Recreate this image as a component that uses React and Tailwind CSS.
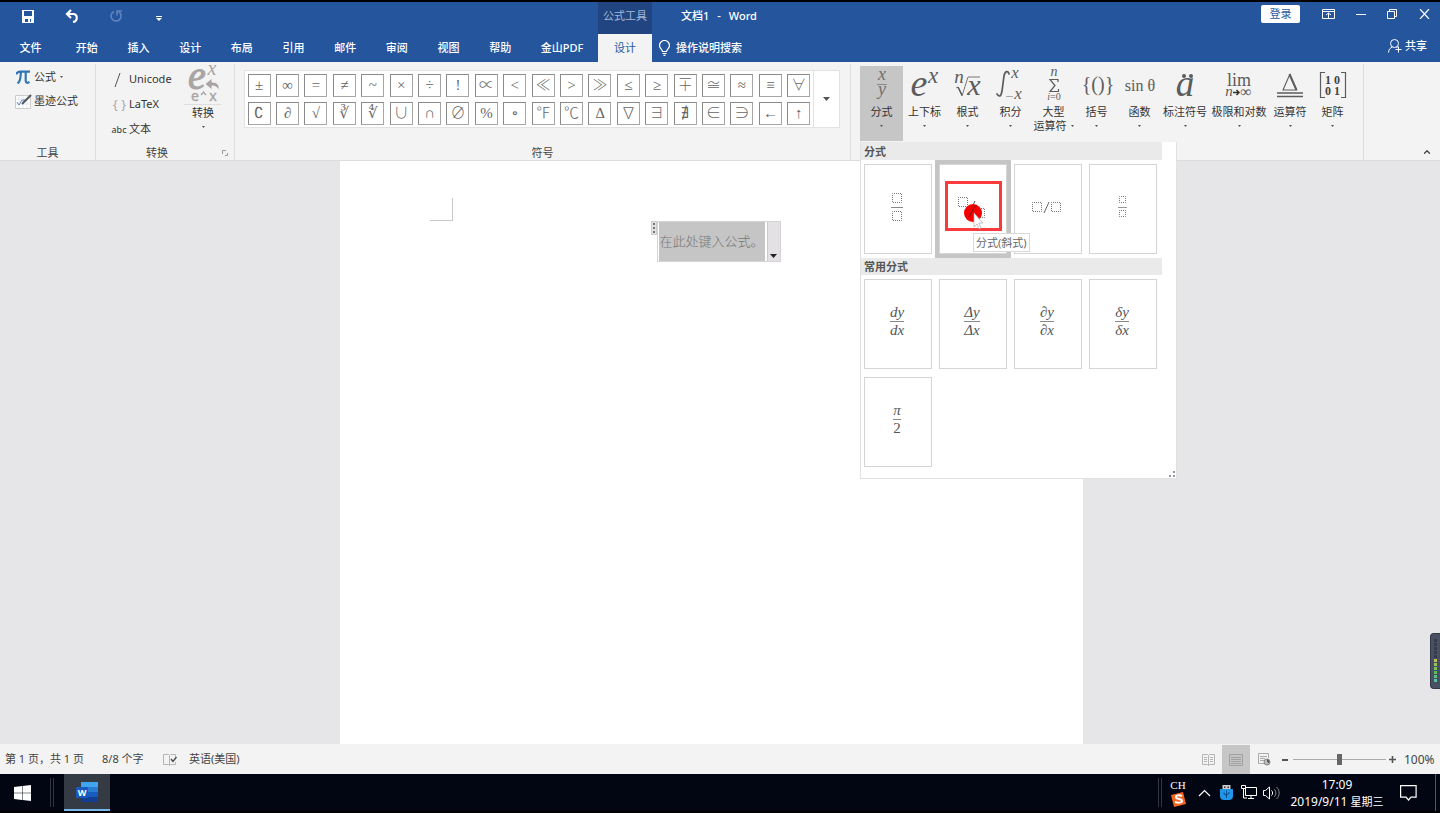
import { ChevronUp } from "lucide-react";

const TABS = ["开始", "插入", "设计", "布局", "引用", "邮件", "审阅", "视图", "帮助"];

const SYMBOLS = [
  "±", "∞", "=", "≠", "~", "×", "÷", "!", "∝", "<", "≪", ">", "≫", "≤", "≥", "∓", "≅", "≈", "≡", "∀",
  "∁", "∂", "√", "∛", "∜", "∪", "∩", "∅", "%", "∘", "℉", "℃", "∆", "∇", "∃", "∄", "∈", "∋", "←", "↑",
];

const COMMON_FRACTIONS = [
  { top: "dy", bottom: "dx", italic: true },
  { top: "Δy", bottom: "Δx", italic: true },
  { top: "∂y", bottom: "∂x", italic: true },
  { top: "δy", bottom: "δx", italic: true },
  { top: "π", bottom: "2", italic: false },
];

const SERIF = "'Liberation Serif', serif";

function MathIcon({ children, width = 42, fill = "#5c5c5c" }) {
  return (
    <svg width={width} height="34" viewBox={`0 0 ${width} 34`} fill={fill} fontFamily={SERIF} textAnchor="middle" className="shrink-0 overflow-visible">
      {children}
    </svg>
  );
}

const STRUCTURES = [
  {
    label: "上下标",
    width: "w-[43px]",
    icon: (
      <MathIcon>
        <text x="15" y="27" fontSize="38" fontStyle="italic">e</text>
        <text x="29" y="14" fontSize="23" fontStyle="italic">x</text>
      </MathIcon>
    ),
  },
  {
    label: "根式",
    width: "w-[43px]",
    icon: (
      <MathIcon>
        <text x="12" y="14" fontSize="19" fontStyle="italic">n</text>
        <path d="M9 19l2-1 4 9 6-19h12" fill="none" stroke="#777" />
        <path d="M11 18l4 8" stroke="#5c5c5c" strokeWidth="1.600" />
        <text x="27" y="26" fontSize="30" fontStyle="italic">x</text>
      </MathIcon>
    ),
  },
  {
    label: "积分",
    width: "w-[43px]",
    icon: (
      <MathIcon>
        <path d="M19 5c-1-4-4-3-5 2l-2 15c-1 6-3 6-5 3" fill="none" stroke="#5c5c5c" strokeWidth="1.700" strokeLinecap="round" />
        <text x="25" y="9" fontSize="17" fontStyle="italic">x</text>
        <path d="M16 27.500h7" stroke="#aaa" />
        <text x="28" y="30" fontSize="17" fontStyle="italic">x</text>
      </MathIcon>
    ),
  },
  {
    label: "大型",
    second: "运算符",
    width: "w-[43px]",
    icon: (
      <MathIcon>
        <text x="21" y="7" fontSize="14" fontStyle="italic">n</text>
        <path d="M25 13v-2.500h-8l5 6-5 6h8.500V20" fill="none" stroke="#5c5c5c" strokeWidth="1.200" />
        <text x="21" y="31" fontSize="10"><tspan fontStyle="italic">i</tspan>=0</text>
      </MathIcon>
    ),
  },
  {
    label: "括号",
    width: "w-[43px]",
    icon: (
      <MathIcon>
        <text x="22" y="22" fontSize="20">{"{()}"}</text>
      </MathIcon>
    ),
  },
  {
    label: "函数",
    width: "w-[43px]",
    icon: (
      <MathIcon>
        <text x="21" y="22" fontSize="16">sin θ</text>
      </MathIcon>
    ),
  },
  {
    label: "标注符号",
    width: "w-12",
    icon: (
      <MathIcon>
        <text x="21" y="27" fontSize="37" fontStyle="italic">a</text>
        <circle cx="20" cy="7" r="2" />
        <circle cx="27" cy="7" r="2" />
      </MathIcon>
    ),
  },
  {
    label: "极限和对数",
    width: "w-[60px]",
    icon: (
      <MathIcon>
        <text x="21" y="17" fontSize="18">lim</text>
        <text x="11" y="27" fontSize="15" fontStyle="italic">n</text>
        <path d="M15 23.500h6M18.500 21l2.500 2.500-2.500 2.500" fill="none" stroke="#333" strokeWidth="1.500" />
        <text x="28" y="28" fontSize="16">∞</text>
      </MathIcon>
    ),
  },
  {
    label: "运算符",
    width: "w-[42px]",
    icon: (
      <MathIcon>
        <path d="M14 21L20.500 6l7 15z" fill="none" stroke="#5c5c5c" strokeWidth="1.100" />
        <path d="M20.500 5l7 16" stroke="#5c5c5c" strokeWidth="2" />
        <path d="M8 24h26M8 27.500h26" stroke="#5c5c5c" strokeWidth="1.600" />
      </MathIcon>
    ),
  },
  {
    label: "矩阵",
    width: "w-[43px]",
    icon: (
      <MathIcon>
        <path d="M13 3.500H8.500v25H13M29 3.500h4.500v25H29" fill="none" stroke="#5c5c5c" strokeWidth="1.200" />
        <g fontWeight="bold" fontSize="12" fill="#444">
          <text x="16" y="15">1</text>
          <text x="25" y="15">0</text>
          <text x="16" y="26">0</text>
          <text x="25" y="26">1</text>
        </g>
      </MathIcon>
    ),
  },
];

function Caret() {
  return (
    <svg width="3" height="2" viewBox="0 0 3 2" className="shrink-0">
      <path d="M0 0h3L1.500 2z" fill="#555" />
    </svg>
  );
}

function TitleBar() {
  return (
    <div className="flex h-8 text-white">
      <div className="flex w-[598px] items-center pl-[21px] pb-1">
        <button aria-label="保存" className="w-[44px]">
          <svg width="14" height="13" viewBox="0 0 14 13">
            <path d="M1 0h12v13H1z" fill="#fff" />
            <path d="M3 1h8v5H3zM4 9h6v3H4z" fill="#25559d" />
            <path d="M7 9h2v3H7z" fill="#fff" />
          </svg>
        </button>
        <button aria-label="撤消" className="w-[44px]">
          <svg width="14" height="14" viewBox="0 0 14 14" fill="none" stroke="#fff" strokeWidth="2.200">
            <path d="M6 1L2 5l4 4M2 5h6c5 0 5 7 0 8" />
          </svg>
        </button>
        <button aria-label="重复" className="w-[46px]">
          <svg width="14" height="14" viewBox="0 0 14 14" fill="none" stroke="#6185bf" strokeWidth="1.600">
            <path d="M5 2.500a5 5 0 1 0 5 .5M8 6.500V2h5" />
          </svg>
        </button>
        <button aria-label="自定义快速访问工具栏" className="pt-1 pl-px">
          <svg width="6" height="5" viewBox="0 0 6 5" fill="#fff">
            <path d="M0 0h6v1H0zM0 2h6L3 5z" />
          </svg>
        </button>
      </div>
      <div className="flex w-[54px] items-center justify-center bg-[#204580] pb-1 text-[11px] text-[#a5b7d6]">公式工具</div>
      <h1 className="flex flex-1 items-center gap-2 pb-1 pl-[29px] text-[11px] font-medium">
        <span>文档1</span>
        <span>-</span>
        <span>Word</span>
      </h1>
      <div className="flex items-start pr-[10px]">
        <button className="mt-[3px] mr-[22px] flex h-[18px] w-[39px] items-center justify-center rounded-xs bg-white text-[11px] text-[#2b5797]">
          登录
        </button>
        <div className="mt-[7px] flex items-center gap-[21px]">
          <button aria-label="功能区显示选项">
            <svg width="13" height="10" viewBox="0 0 13 10" fill="none" stroke="#fff">
              <path d="M.5.5h12v9H.5zM.5 2.500h12M6.500 9V4M4 6l2.500-2L9 6" />
            </svg>
          </button>
          <button aria-label="最小化">
            <svg width="10" height="10" viewBox="0 0 10 10" stroke="#fff">
              <path d="M0 5.500h10" />
            </svg>
          </button>
          <button aria-label="向下还原">
            <svg width="10" height="10" viewBox="0 0 10 10" fill="none" stroke="#fff">
              <path d="M.5 2.500h7v7h-7zM2.500 2.500v-2h7v7h-2" />
            </svg>
          </button>
          <button aria-label="关闭">
            <svg width="12" height="10" viewBox="0 0 12 10" stroke="#fff" strokeWidth="1.200">
              <path d="M2 0l9 10M11 0L2 10" />
            </svg>
          </button>
        </div>
      </div>
    </div>
  );
}

function TabBar() {
  return (
    <nav className="flex h-7 text-[11px] font-medium text-white">
      <div className="flex w-[598px] shrink-0">
        <button className="w-[61px]">文件</button>
        {TABS.map((tab) => (
          <button key={tab} className="flex-1">{tab}</button>
        ))}
        <button className="w-[72px]">金山PDF</button>
      </div>
      <button className="w-[54px] bg-[#f3f3f3] font-normal text-[#2b579a]">设计</button>
      <button className="flex items-center gap-[6px] pl-[7px]">
        <svg width="11" height="16" viewBox="0 0 11 16" fill="none" stroke="#fff" strokeWidth="1.200">
          <path d="M3.500 11.500c0-2-3-3-3-6a5 5 0 0 1 10 0c0 3-3 4-3 6zM3.500 13.500h4M4.500 15.300h2" />
        </svg>
        操作说明搜索
      </button>
      <button className="ml-auto flex items-center gap-[3px] pr-[13px] pb-1">
        <svg width="14" height="14" viewBox="0 0 14 14" fill="none" stroke="#fff">
          <circle cx="6.500" cy="4.500" r="4" />
          <path d="M.5 13.500c0-3 2-5 4-5.500M8.500 8l1 1M10.500 7.500v6M7.500 10.500h6" />
        </svg>
        共享
      </button>
    </nav>
  );
}

function Group({ label, className, children }) {
  return (
    <section className={`flex flex-col border-r border-[#dedede] ${className}`}>
      <div className="flex-1">{children}</div>
      <h2 className="h-[15px] text-center text-[11px] leading-4 text-[#444]">{label}</h2>
    </section>
  );
}

function SmallBox({ x, y, size = 9 }) {
  return (
    <rect x={x} y={y} width={size} height={size} fill="none" stroke="#777" strokeDasharray="1 1" strokeDashoffset="0.5" />
  );
}

function FractionMenu() {
  const card = "flex h-[90px] w-[68px] items-center justify-center border border-[#d5d5d5] bg-white";
  const heading = "w-[301px] bg-[#eaeaea] pl-[3px] text-[11px] font-bold text-[#555]";
  return (
    <div className="absolute top-[76px] left-0 z-10 w-[317px] border border-t-0 border-[#e1e1e1] bg-white text-left">
      <h3 className={`h-[18px] leading-5 ${heading}`}>分式</h3>
      <div className="grid grid-cols-[repeat(4,68px)] gap-x-[7px] py-1 pl-[3px]">
        <button aria-label="分式(竖式)" className={card}>
          <svg width="14" height="30" viewBox="0 0 14 30" className="mr-[2px] mb-1">
            <SmallBox x={2.5} y={1.5} />
            <path d="M1 15.500h12" stroke="#888" />
            <SmallBox x={2.5} y={19.5} />
          </svg>
        </button>
        <div className="relative">
          <button aria-label="分式(斜式)" className={`${card} outline-4 outline-[#c5c5c5]`}>
            <svg width="30" height="30" viewBox="0 0 30 30" className="mr-[2px]">
              <SmallBox x={1.5} y={3.5} />
              <path d="M12 20l6-13" stroke="#555" />
              <SmallBox x={18.5} y={14.5} />
            </svg>
          </button>
          <div className="absolute top-[17px] left-[6px] h-[50px] w-[57px] border-3 border-[#fb3b3b]" />
          <svg width="20" height="26" viewBox="0 0 20 26" className="absolute top-[40px] left-[25px]">
            <circle cx="9" cy="9" r="9" fill="#f40000" />
            <path d="M5 13l6-11" stroke="#7a1010" />
            <path d="M10 9v14l3-3 2 5 2-1-2-5h4z" fill="#fff" stroke="#aaa" strokeWidth=".7" />
          </svg>
          <div role="tooltip" className="absolute top-[69px] left-[34px] z-10 h-[19px] border border-[#d9d9d9] bg-white px-[2px] text-[11px] leading-[17px] whitespace-nowrap text-[#666]">
            分式(斜式)
          </div>
        </div>
        <button aria-label="分式(横式)" className={card}>
          <svg width="32" height="16" viewBox="0 0 32 16" className="mr-[2px] mb-1">
            <SmallBox x={1.5} y={3.5} />
            <path d="M13 14l5-11" stroke="#666" />
            <SmallBox x={20.5} y={3.5} />
          </svg>
        </button>
        <button aria-label="小型分式" className={card}>
          <svg width="10" height="24" viewBox="0 0 10 24" className="mr-[2px] mb-1">
            <SmallBox x={2.5} y={1.5} size={6} />
            <path d="M1 12.500h9" stroke="#999" />
            <SmallBox x={2.5} y={15.5} size={6} />
          </svg>
        </button>
      </div>
      <h3 className={`h-[17px] leading-[18px] ${heading}`}>常用分式</h3>
      <div className="grid grid-cols-[repeat(4,68px)] gap-x-[7px] gap-y-2 pt-1 pb-[11px] pl-[3px]">
        {COMMON_FRACTIONS.map((f) => (
          <button key={f.top} className={card}>
            <span className="mr-[2px] mb-[5px] flex flex-col text-center font-['Liberation_Serif',serif] text-[15px] leading-[17px] text-[#555]">
              <span className="border-b border-[#888] italic">{f.top}</span>
              <span className={f.italic ? "italic" : ""}>{f.bottom}</span>
            </span>
          </button>
        ))}
      </div>
      <svg width="6" height="6" viewBox="0 0 6 6" fill="#999" className="absolute right-px bottom-px">
        <path d="M4 0h2v2H4zM0 4h2v2H0zM4 4h2v2H4z" />
      </svg>
    </div>
  );
}

function Ribbon() {
  return (
    <div className="flex h-[99px] border-b border-[#dcdcdc] bg-[#f3f3f3] pt-[2px] text-[11px] text-[#333]">
      <Group label="工具" className="w-24">
        <button className="mt-[5px] ml-4 flex h-4 items-center gap-1">
          <svg width="14" height="14" viewBox="0 0 13 13" fill="none" stroke="#2e75b6" strokeWidth="2">
            <path d="M0 4c1-2 2-2.500 4-2.500h9M4.500 2c0 4 0 8-3 10.500M9 2v8c0 2 2 2.500 3.500 1" />
          </svg>
          公式
          <Caret />
        </button>
        <button className="mt-2 ml-[15px] flex h-4 items-center gap-[2px]">
          <svg width="17" height="15" viewBox="0 0 17 15" fill="none">
            <path d="M.5 1.500h15v13H.5z" fill="#fff" stroke="#ccc" />
            <path d="M4 2v12M8 2v12M12 2v12M1 5h14M1 10h14" stroke="#e4e8f0" />
            <path d="M2 8l2 3 3-5h3" stroke="#5b87c5" />
            <path d="M7 10L16 1" stroke="#555" strokeWidth="2" />
          </svg>
          墨迹公式
        </button>
      </Group>

      <section className="flex w-[139px] flex-col border-r border-[#dedede]">
        <div className="flex flex-1">
          <div className="flex w-[89px] flex-col pt-[3px] pl-[13px]">
            <button className="flex h-[25px] items-center">
              <svg width="20" height="14" viewBox="0 0 20 14">
                <path d="M6 14L11 0" stroke="#555" />
              </svg>
              Unicode
            </button>
            <button className="flex h-[25px] items-center">
              <span className="w-5 pl-px text-[13px] whitespace-nowrap text-[#aaa]">{"{ }"}</span>
              LaTeX
            </button>
            <button className="flex h-[25px] items-center">
              <span className="w-5 text-[9px]">abc</span>
              文本
            </button>
          </div>
          <button className="flex w-9 flex-col items-center pt-px">
            <svg width="40" height="40" viewBox="0 0 40 40" fill="#a9a5a5" textAnchor="middle" className="shrink-0 overflow-visible">
              <text x="14" y="24" fontSize="40" fontStyle="italic" fontFamily={SERIF} stroke="#a9a5a5">e</text>
              <text x="29" y="10" fontSize="20" fontStyle="italic" fontFamily={SERIF}>x</text>
              <path d="M22 19l7-6v4c5 0 8 3 7 8-2-3-4-4-7-4v4z" stroke="#f3f3f3" />
              <text x="12" y="36" fontSize="14" fontFamily="Noto Sans" stroke="#a9a5a5" strokeWidth=".4">e</text>
              <path d="M18 30l2.500-3 2.500 3" fill="none" stroke="#a9a5a5" strokeWidth="1.400" />
              <text x="30" y="36" fontSize="14" fontFamily="Noto Sans" stroke="#a9a5a5" strokeWidth=".4">x</text>
              <path d="M1 39.500h38" stroke="#dedede" />
            </svg>
            <span className="leading-4 whitespace-nowrap">转换</span>
            <span className="flex h-3 items-center"><Caret /></span>
          </button>
        </div>
        <div className="relative h-[15px] pr-4 text-center leading-4 text-[#444]">
          转换
          <button aria-label="转换选项" className="absolute right-[6px] bottom-[4px]">
            <svg width="6" height="6" viewBox="0 0 6 6" fill="none" stroke="#999">
              <path d="M.5 4V.5H4M3 5.500h2.500V3" />
            </svg>
          </button>
        </div>
      </section>

      <Group label="符号" className="flex-1">
        <div className="mt-[6px] mr-[10px] ml-[9px] flex border border-[#e2e2e2] bg-white">
          <div className="grid flex-1 grid-cols-20">
            {SYMBOLS.map((s) => (
              <span key={s} className="flex h-7 items-center justify-center">
                <button className="flex size-[23px] items-center justify-center border border-t-[#8a8a8a] border-r-[#a6a6a6] border-b-[#a6a6a6] border-l-[#8a8a8a] font-['Liberation_Serif','Noto_Sans_CJK_SC','DejaVu_Serif',serif] text-[15px] leading-none font-light text-[#666]">
                  {s}
                </button>
              </span>
            ))}
          </div>
          <button aria-label="其他符号" className="flex w-[26px] items-center justify-center border-l border-[#e2e2e2]">
            <svg width="7" height="4" viewBox="0 0 7 4"><path d="M0 0h7L3.500 4z" fill="#555" /></svg>
          </button>
        </div>
      </Group>

      <section className="flex w-[513px] shrink-0 items-start border-r border-[#dedede] pt-[2px] pl-[9px]">
        <div className="relative w-[43px]">
          <button className="flex h-[75px] w-full flex-col items-center bg-[#c6c6c6] pt-[3px]" aria-expanded="true">
            <MathIcon fill="#6f6f6f">
              <text x="21" y="11" fontSize="18" fontStyle="italic">x</text>
              <path d="M16 15.500h10" stroke="#888" />
              <text x="21" y="26" fontSize="18" fontStyle="italic">y</text>
            </MathIcon>
            <span className="leading-[17px]">分式</span>
            <span className="flex h-3 items-center"><Caret /></span>
          </button>
          <FractionMenu />
        </div>
        {STRUCTURES.map((s) => (
          <button key={s.label} className={`flex flex-col items-center pt-[3px] whitespace-nowrap ${s.width}`}>
            {s.icon}
            <span className="leading-[17px]">{s.label}</span>
            <span className="flex h-3 items-center gap-1">
              {s.second}
              <Caret />
            </span>
          </button>
        ))}
      </section>
      <div className="flex w-[76px] items-end justify-end pr-2 pb-[3px]">
        <button aria-label="折叠功能区">
          <ChevronUp size={10} color="#444" strokeWidth={3} />
        </button>
      </div>
    </div>
  );
}

function Document() {
  return (
    <main className="flex flex-1 justify-center overflow-hidden bg-[#e6e6e8] pr-[17px]">
      <article className="w-[743px] bg-white pt-[37px]">
        <div className="ml-[90px] size-[23px] border-r border-b border-[#c8c8c8]" />
        <div className="flex justify-center pl-[8px]">
          <button aria-label="移动公式" className="h-[14px] w-[6px] border border-[#ccc] bg-[#e3e1e3]">
            <svg width="4" height="12" viewBox="0 0 4 12" fill="#777">
              <path d="M1 1h2v2H1zM1 5h2v2H1zM1 9h2v2H1z" />
            </svg>
          </button>
          <div className="flex h-[41px] border border-[#d4d4d4]">
            <input
              aria-label="公式"
              defaultValue="在此处键入公式。"
              className="ml-px w-[106px] bg-[#c5c5c5] pl-px text-[13px] font-light text-[#777] outline-none"
            />
            <button aria-label="公式选项" className="ml-[2px] flex w-[13px] items-end justify-center border-l border-[#ccc] bg-[#e3e1e3] pb-[3px]">
              <svg width="7" height="4" viewBox="0 0 7 4"><path d="M0 0h7L3.500 4z" fill="#222" /></svg>
            </button>
          </div>
        </div>
      </article>
    </main>
  );
}

function StatusBar() {
  return (
    <div className="flex h-[30px] items-center bg-[#f3f3f3] pt-px pl-[5px] text-[11px] text-[#444]">
      <span className="w-[97px]">第 1 页，共 1 页</span>
      <span className="w-[61px]">8/8 个字</span>
      <button aria-label="校对" className="w-[26px]">
        <svg width="14" height="12" viewBox="0 0 14 12" fill="none" stroke="#b5b5b5">
          <path d="M6.500 11.500V1.500l-1-1h-5v10h5zM6.500 1.500l1-1h5V3M12.500 8v2.500h-5l-1 1" />
          <path d="M8 5l2 2.500L13.500 3" stroke="#444" strokeWidth="1.300" />
        </svg>
      </button>
      <span>英语(美国)</span>
      <div className="ml-auto flex h-full items-center">
        <button aria-label="阅读视图" className="flex w-[28px] justify-center">
          <svg width="13" height="12" viewBox="0 0 13 12" fill="none" stroke="#b5b5b5">
            <path d="M6.500 11.500v-10l-1-1h-5v10h5zM6.500 1.500l1-1h5v10h-5l-1 1M2 3.500h3M2 5.500h3M2 7.500h3M8 3.500h3M8 5.500h3M8 7.500h3" />
          </svg>
        </button>
        <button aria-label="页面视图" className="flex h-full w-7 items-center justify-center bg-[#c6c6c6]">
          <svg width="14" height="12" viewBox="0 0 14 12" fill="none" stroke="#a0a0a0">
            <path d="M.5.5h13v11H.5zM2 3.500h10M2 5.500h10M2 7.500h10M2 9.500h10" />
          </svg>
        </button>
        <button aria-label="Web 版式视图" className="flex w-[28px] justify-center">
          <svg width="13" height="13" viewBox="0 0 13 13" fill="none" stroke="#aaa">
            <path d="M6 10.500H.5V.5h10V5M2 3.500h7M2 5.500h5M2 7.500h4" />
            <circle cx="9" cy="9" r="3" fill="#bbb" stroke="#888" />
            <path d="M9 6.500c2 0 3 2 2 4l-2-2z" fill="#555" stroke="none" />
          </svg>
        </button>
        <button aria-label="缩小" className="ml-1 flex w-[11px] items-center">
          <svg width="6" height="2" viewBox="0 0 6 2"><path d="M0 0h6v2H0z" fill="#555" /></svg>
        </button>
        <input
          type="range"
          aria-label="显示比例"
          min="0"
          max="100"
          defaultValue="50"
          className="h-3 w-[93px] appearance-none bg-transparent [&::-webkit-slider-runnable-track]:h-px [&::-webkit-slider-runnable-track]:bg-[#aaa] [&::-webkit-slider-thumb]:-mt-[5px] [&::-webkit-slider-thumb]:h-[11px] [&::-webkit-slider-thumb]:w-[5px] [&::-webkit-slider-thumb]:appearance-none [&::-webkit-slider-thumb]:bg-[#666]"
        />
        <button aria-label="放大" className="ml-[3px] w-[15px]">
          <svg width="7" height="7" viewBox="0 0 7 7" stroke="#555" strokeWidth="1.600"><path d="M0 3.500h7M3.500 0v7" /></svg>
        </button>
        <span className="w-9 text-[12px]">100%</span>
      </div>
    </div>
  );
}

function TaskBar() {
  return (
    <footer className="flex h-[37px] bg-[#020612] text-white">
      <button aria-label="开始菜单" className="flex w-[45px] items-center justify-center">
        <svg width="17" height="16" viewBox="0 0 17 16" fill="#fff">
          <path d="M0 2l8-1v6.700H0zM8.500 1L17 0v7.700H8.500zM0 8.300h8V15l-8-1zM8.500 8.300H17V16l-8.500-1z" />
        </svg>
      </button>
      <span className="my-1 ml-[5px] w-1 border-x border-[#34363f]" />
      <button aria-label="Word" className="ml-[10px] flex w-[46px] items-center justify-center border-b-2 border-[#76b9ed] bg-[#343b45]">
        <svg width="24" height="22" viewBox="0 0 24 22">
          <path d="M6 1h17v5H6z" fill="#41a5ee" />
          <path d="M6 6h17v5H6z" fill="#2b7cd3" />
          <path d="M6 11h17v5H6z" fill="#185abd" />
          <path d="M6 16h17v5H6z" fill="#103f91" />
          <rect x="1" y="6" width="12" height="11" rx="1" fill="#185abd" />
          <text x="7" y="15" fontSize="9" fontWeight="bold" textAnchor="middle" fill="#fff" fontFamily="Noto Sans">W</text>
        </svg>
      </button>
      <div className="ml-auto flex items-center">
        <span className="h-[29px] w-1 border-x border-[#34363f]" />
        <div className="ml-[5px] flex w-[22px] flex-col items-center">
          <span className="font-['Liberation_Serif',serif] text-[11px] leading-[14px]">CH</span>
          <svg width="15" height="15" viewBox="0 0 15 15" className="mb-px">
            <path d="M0 3l12-3 3 12-12 3z" fill="#f26522" />
            <path d="M11 4c-3-1-6-1-6 1 0 3 6 1 6 4 0 2-4 2-7 1" fill="none" stroke="#fff" strokeWidth="2" />
          </svg>
        </div>
        <button aria-label="显示隐藏的图标" className="ml-[9px]">
          <svg width="13" height="8" viewBox="0 0 13 8" fill="none" stroke="#fff" strokeWidth="1.200"><path d="M1 7l5.500-5.500L12 7" /></svg>
        </button>
        <svg width="13" height="15" viewBox="0 0 13 15" className="ml-[9px]">
          <path d="M2.500 0h8v5h-8z" fill="#ccc" />
          <path d="M4 1.500h1.500V3H4zM7.500 1.500H9V3H7.500z" fill="#333" />
          <path d="M0 4h13v7c0 3-2 4-4 4H4c-2 0-4-1-4-4z" fill="#2196e8" />
          <path d="M6.500 5.500V13M4 7.500V9l2.500 1.500M9 7v1.500L6.500 10" fill="none" stroke="#0a4f91" />
        </svg>
        <svg width="17" height="15" viewBox="0 0 17 15" fill="none" stroke="#fff" className="ml-[8px]">
          <path d="M4.500 2.500h11v8h-11zM7 13.500h6M10 10.500v3M2.500 4v9H6M.5.500h4v3h-4z" />
        </svg>
        <svg width="17" height="14" viewBox="0 0 17 14" fill="none" stroke="#fff" className="ml-[5px]">
          <path d="M.5 4.500h2L6.500 1v12l-4-3.500h-2zM8.500 4.500c1.500 1.500 1.500 3.500 0 5" />
          <path d="M11 3c2.500 2 2.500 6 0 8M13.500 1c3.500 3 3.500 9 0 12" stroke="#888" />
        </svg>
        <div className="ml-[8px] flex w-[98px] flex-col items-center text-[12px] leading-[17px] whitespace-nowrap">
          <span>17:09</span>
          <span>2019/9/11 <span className="text-[11px]">星期三</span></span>
        </div>
        <button aria-label="通知" className="ml-[14px]">
          <svg width="17" height="16" viewBox="0 0 17 16" fill="none" stroke="#fff" strokeWidth="1.200">
            <path d="M.6.600h15.500v11.500H11L8.500 15 6 12.100H.6z" />
          </svg>
        </button>
        <span className="ml-[18px] h-full w-[5px] border-l border-[#555]" />
      </div>
    </footer>
  );
}

function LevelMeter() {
  return (
    <div className="absolute top-[631px] right-0 flex h-14 w-[10px] flex-col rounded-l-sm border border-r-0 border-[#333846] bg-[#4a5063] px-[3px] py-[5px]">
      {[...Array(11)].map((_, i) => (
        <span key={i} className="mb-px h-[3px] bg-[#353b4b]" style={i > 4 ? { backgroundColor: `hsl(${62 + (i - 5) * 20} 45% 55%)` } : undefined} />
      ))}
    </div>
  );
}

export default function App() {
  return (
    <div className="relative flex min-h-screen flex-col overflow-hidden border-y-2 border-black font-['Noto_Sans','Noto_Sans_CJK_SC',sans-serif]">
      <header className="bg-[#25559d]">
        <TitleBar />
        <TabBar />
      </header>
      <Ribbon />
      <Document />
      <StatusBar />
      <TaskBar />
      <LevelMeter />
    </div>
  );
}
